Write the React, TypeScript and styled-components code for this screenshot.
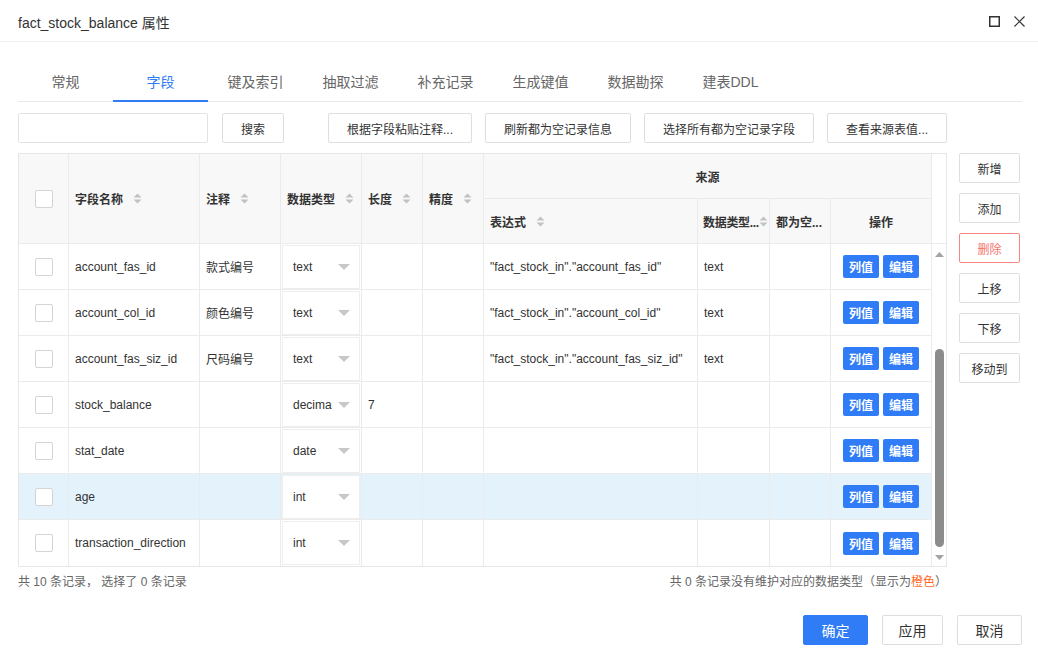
import React from 'react';
import styled, { createGlobalStyle, css } from 'styled-components';

const FONT = `"Liberation Sans", "Noto Sans CJK SC", sans-serif`;
const BLUE = '#2f7cf6';
const LINE = '#ebebeb';

const GlobalStyle = createGlobalStyle`
  html, body { margin: 0; padding: 0; background: #fff; }
  body { font-family: ${FONT}; color: #333; }
  *, *::before, *::after { box-sizing: border-box; }
`;

const Dialog = styled.div`
  width: 1038px;
  height: 651px;
  display: flex;
  flex-direction: column;
  overflow: hidden;
  background: #fff;
`;

const TitleBar = styled.header`
  height: 42px;
  flex-shrink: 0;
  display: flex;
  align-items: center;
  justify-content: space-between;
  padding: 2px 13px 0 18px;
  border-bottom: 1px solid #eeeeee;
`;

const Title = styled.h1`
  margin: 0;
  font-size: 14px;
  font-weight: normal;
  color: #333;
`;

const WindowControls = styled.div`
  display: flex;
  align-items: center;
  gap: 14px;
`;

const IconButton = styled.span`
  width: 11px;
  height: 11px;
  display: flex;
`;

const Body = styled.main`
  flex: 1;
  display: flex;
  flex-direction: column;
  padding: 20px 16px 6px 18px;
`;

const TabBar = styled.nav`
  display: flex;
  height: 40px;
  border-bottom: 1px solid #e8e8e8;
`;

const Tab = styled.div<{ $active?: boolean }>`
  width: 95px;
  height: 40px;
  margin-bottom: -1px;
  display: flex;
  align-items: center;
  justify-content: center;
  font-size: 14px;
  color: ${(p) => (p.$active ? BLUE : '#666')};
  border-bottom: 2px solid ${(p) => (p.$active ? BLUE : 'transparent')};
`;

const Toolbar = styled.div`
  display: flex;
  align-items: center;
  gap: 44px;
  margin-top: 11px;
  height: 30px;
`;

const ToolGroup = styled.div`
  display: flex;
  gap: 14px;
`;

const ActionGroup = styled.div`
  display: flex;
  gap: 13px;
`;

const SearchInput = styled.input`
  width: 190px;
  height: 30px;
  border: 1px solid #e3e3e3;
  border-radius: 2px;
  padding: 0 8px;
  font-family: inherit;
  font-size: 12px;
  outline: none;
`;

const Button = styled.button<{ $variant?: 'default' | 'danger' | 'primary'; $big?: boolean; $w?: number }>`
  height: 30px;
  padding: 0 18px;
  ${(p) =>
    p.$w &&
    css`
      width: ${p.$w}px;
      padding: 0;
    `}
  border-radius: 2px;
  font-family: ${FONT};
  font-size: ${(p) => (p.$big ? '14px' : '12px')};
  white-space: nowrap;
  cursor: pointer;
  background: #fff;
  color: #333;
  border: 1px solid #dedede;
  ${(p) =>
    p.$variant === 'danger' &&
    css`
      color: #f4736b;
      border-color: #f4877f;
    `}
  ${(p) =>
    p.$variant === 'primary' &&
    css`
      color: #fff;
      background: ${BLUE};
      border-color: ${BLUE};
    `}
`;

const Main = styled.div`
  display: flex;
  gap: 12px;
  margin-top: 10px;
`;

const LeftColumn = styled.div`
  width: 929px;
  display: flex;
  flex-direction: column;
`;

const SideButtons = styled.div`
  width: 61px;
  display: flex;
  flex-direction: column;
  gap: 10px;
`;

const TableFrame = styled.div`
  display: flex;
  border: 1px solid #e6e6e6;
`;

const Table = styled.table`
  width: 913px;
  table-layout: fixed;
  border-collapse: separate;
  border-spacing: 0;
  font-size: 12px;
`;

const HeadRow = styled.tr`
  height: 45px;
`;

const BodyRow = styled.tr<{ $selected?: boolean }>`
  height: 46px;
  background: ${(p) => (p.$selected ? '#e3f2fb' : '#fff')};
  &:last-child td {
    border-bottom: none;
  }
`;

const Th = styled.th<{ $center?: boolean }>`
  padding: 0 6px;
  background: #f8f8f8;
  border-right: 1px solid ${LINE};
  border-bottom: 1px solid ${LINE};
  font-weight: bold;
  color: #333;
  text-align: ${(p) => (p.$center ? 'center' : 'left')};
  white-space: nowrap;
  overflow: hidden;
`;

const HeadLabel = styled.div<{ $gap?: number }>`
  display: flex;
  align-items: center;
  gap: ${(p) => p.$gap ?? 10}px;
`;

const TightText = styled.span`
  letter-spacing: -0.3px;
  white-space: nowrap;
`;

const Td = styled.td<{ $center?: boolean; $pad?: number }>`
  padding: 0 ${(p) => (p.$pad ?? 6)}px;
  border-right: 1px solid ${LINE};
  border-bottom: 1px solid ${LINE};
  color: #333;
  text-align: ${(p) => (p.$center ? 'center' : 'left')};
  white-space: nowrap;
  overflow: hidden;
`;

const Checkbox = styled.span`
  display: inline-block;
  width: 18px;
  height: 18px;
  border: 1px solid #d4d4d4;
  border-radius: 2px;
  background: #fff;
  vertical-align: middle;
`;

const SelectBox = styled.div`
  height: 44px;
  display: flex;
  align-items: center;
  justify-content: space-between;
  padding: 0 9px 0 10px;
  background: #fff;
  border: 1px solid #eeeeee;
`;

const OpButton = styled.span`
  display: inline-flex;
  align-items: center;
  justify-content: center;
  width: 36px;
  height: 23px;
  margin: 0 2px;
  border-radius: 2px;
  background: ${BLUE};
  color: #fff;
  font-size: 12px;
  font-weight: bold;
  vertical-align: middle;
`;

const ScrollColumn = styled.div`
  width: 14px;
  display: flex;
  flex-direction: column;
`;

const ScrollHead = styled.div`
  height: 90px;
  border-bottom: 1px solid ${LINE};
  background: #fff;
`;

const ScrollTrack = styled.div`
  flex: 1;
  display: flex;
  flex-direction: column;
  align-items: center;
  padding: 8px 0 6px;
`;

const ScrollThumb = styled.div`
  width: 9px;
  height: 198px;
  margin-top: 92px;
  border-radius: 5px;
  background: #8c8c8c;
`;

const ScrollSpacer = styled.div`
  flex: 1;
`;

const FooterRow = styled.div`
  display: flex;
  justify-content: space-between;
  margin-top: 5px;
  font-size: 12px;
  color: #666;
`;

const Orange = styled.span`
  color: #ff6a1f;
`;

const BottomBar = styled.div`
  margin-top: auto;
  display: flex;
  justify-content: flex-end;
  gap: 14px;
`;

const SortIcon = () => (
  <svg width="9" height="11" viewBox="0 0 9 11" style={{ flexShrink: 0 }}>
    <path d="M0.5 4.5 L4.5 0.5 L8.5 4.5 Z" fill="#c2c2c2" />
    <path d="M0.5 6.5 L4.5 10.5 L8.5 6.5 Z" fill="#c2c2c2" />
  </svg>
);

const Caret = () => (
  <svg width="12" height="6" viewBox="0 0 12 6">
    <path d="M0 0 L12 0 L6 6 Z" fill="#c8c8c8" />
  </svg>
);

const ArrowUp = () => (
  <svg width="9" height="5" viewBox="0 0 9 5">
    <path d="M0 5 L4.5 0 L9 5 Z" fill="#a3a3a3" />
  </svg>
);

const ArrowDown = () => (
  <svg width="9" height="5" viewBox="0 0 9 5">
    <path d="M0 0 L4.5 5 L9 0 Z" fill="#a3a3a3" />
  </svg>
);

type Row = {
  name: string;
  comment?: string;
  type: string;
  len?: string;
  expr?: string;
  srcType?: string;
  selected?: boolean;
};

const rows: Row[] = [
  { name: 'account_fas_id', comment: '款式编号', type: 'text', expr: '"fact_stock_in"."account_fas_id"', srcType: 'text' },
  { name: 'account_col_id', comment: '颜色编号', type: 'text', expr: '"fact_stock_in"."account_col_id"', srcType: 'text' },
  { name: 'account_fas_siz_id', comment: '尺码编号', type: 'text', expr: '"fact_stock_in"."account_fas_siz_id"', srcType: 'text' },
  { name: 'stock_balance', type: 'decima', len: '7' },
  { name: 'stat_date', type: 'date' },
  { name: 'age', type: 'int', selected: true },
  { name: 'transaction_direction', type: 'int' },
];

const tabs = ['常规', '字段', '键及索引', '抽取过滤', '补充记录', '生成键值', '数据勘探', '建表DDL'];
const colWidths = [50, 131, 81, 81, 61, 61, 214, 72, 61, 101];

const Sortable = ({ label }: { label: string }) => (
  <HeadLabel>
    <span>{label}</span>
    <SortIcon />
  </HeadLabel>
);

export default function App() {
  return (
    <>
      <GlobalStyle />
      <Dialog>
        <TitleBar>
          <Title>fact_stock_balance 属性</Title>
          <WindowControls>
            <IconButton>
              <svg width="11" height="11" viewBox="0 0 11 11">
                <rect x="0.75" y="0.75" width="9.5" height="9.5" fill="none" stroke="#333" strokeWidth="1.5" />
              </svg>
            </IconButton>
            <IconButton>
              <svg width="11" height="11" viewBox="0 0 11 11">
                <path d="M0.5 0.5 L10.5 10.5 M10.5 0.5 L0.5 10.5" stroke="#333" strokeWidth="1.2" />
              </svg>
            </IconButton>
          </WindowControls>
        </TitleBar>
        <Body>
          <TabBar>
            {tabs.map((t) => (
              <Tab key={t} $active={t === '字段'}>
                {t}
              </Tab>
            ))}
          </TabBar>
          <Toolbar>
            <ToolGroup>
              <SearchInput />
              <Button>搜索</Button>
            </ToolGroup>
            <ActionGroup>
              <Button>根据字段粘贴注释...</Button>
              <Button>刷新都为空记录信息</Button>
              <Button>选择所有都为空记录字段</Button>
              <Button>查看来源表值...</Button>
            </ActionGroup>
          </Toolbar>
          <Main>
            <LeftColumn>
              <TableFrame>
                <Table>
                  <colgroup>
                    {colWidths.map((w, i) => (
                      <col key={i} style={{ width: w }} />
                    ))}
                  </colgroup>
                  <thead>
                    <HeadRow>
                      <Th rowSpan={2} $center>
                        <Checkbox />
                      </Th>
                      <Th rowSpan={2}>
                        <Sortable label="字段名称" />
                      </Th>
                      <Th rowSpan={2}>
                        <Sortable label="注释" />
                      </Th>
                      <Th rowSpan={2}>
                        <Sortable label="数据类型" />
                      </Th>
                      <Th rowSpan={2}>
                        <Sortable label="长度" />
                      </Th>
                      <Th rowSpan={2}>
                        <Sortable label="精度" />
                      </Th>
                      <Th colSpan={4} $center>
                        来源
                      </Th>
                    </HeadRow>
                    <HeadRow>
                      <Th>
                        <Sortable label="表达式" />
                      </Th>
                      <Th style={{ paddingRight: 1, paddingLeft: 5 }}>
                        <HeadLabel $gap={0}>
                          <TightText>数据类型...</TightText>
                          <SortIcon />
                        </HeadLabel>
                      </Th>
                      <Th>都为空...</Th>
                      <Th $center>操作</Th>
                    </HeadRow>
                  </thead>
                  <tbody>
                    {rows.map((r) => (
                      <BodyRow key={r.name} $selected={r.selected}>
                        <Td $center>
                          <Checkbox />
                        </Td>
                        <Td>{r.name}</Td>
                        <Td>{r.comment}</Td>
                        <Td $pad={1}>
                          <SelectBox>
                            <span>{r.type}</span>
                            <Caret />
                          </SelectBox>
                        </Td>
                        <Td>{r.len}</Td>
                        <Td />
                        <Td>{r.expr}</Td>
                        <Td>{r.srcType}</Td>
                        <Td />
                        <Td $center $pad={0}>
                          <OpButton>列值</OpButton>
                          <OpButton>编辑</OpButton>
                        </Td>
                      </BodyRow>
                    ))}
                  </tbody>
                </Table>
                <ScrollColumn>
                  <ScrollHead />
                  <ScrollTrack>
                    <ArrowUp />
                    <ScrollThumb />
                    <ScrollSpacer />
                    <ArrowDown />
                  </ScrollTrack>
                </ScrollColumn>
              </TableFrame>
              <FooterRow>
                <span>共 10 条记录， 选择了 0 条记录</span>
                <span>
                  共 0 条记录没有维护对应的数据类型（显示为<Orange>橙色</Orange>）
                </span>
              </FooterRow>
            </LeftColumn>
            <SideButtons>
              <Button $w={61}>新增</Button>
              <Button $w={61}>添加</Button>
              <Button $w={61} $variant="danger">
                删除
              </Button>
              <Button $w={61}>上移</Button>
              <Button $w={61}>下移</Button>
              <Button $w={61}>移动到</Button>
            </SideButtons>
          </Main>
          <BottomBar>
            <Button $variant="primary" $big $w={65}>
              确定
            </Button>
            <Button $big $w={61}>
              应用
            </Button>
            <Button $big $w={65}>
              取消
            </Button>
          </BottomBar>
        </Body>
      </Dialog>
    </>
  );
}
